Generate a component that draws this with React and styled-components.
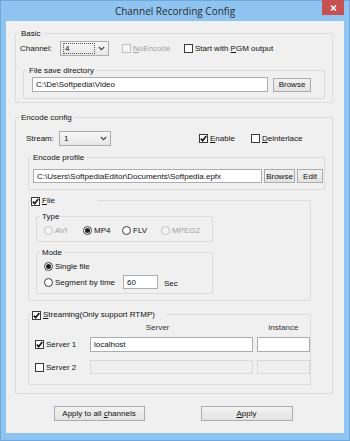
import styled, { createGlobalStyle } from "styled-components";

const GlobalStyle = createGlobalStyle`
  * {
    box-sizing: border-box;
  }
  body {
    margin: 0;
    font-family: "Liberation Sans", Arial, sans-serif;
    font-size: 8px;
    color: #111;
  }
`;

const Chevron = () => (
  <svg width="7" height="5" viewBox="0 0 7 5">
    <polyline points="0.8,1 3.5,3.7 6.2,1" fill="none" stroke="#444" strokeWidth="1.1" />
  </svg>
);

const CheckMark = () => (
  <svg width="7" height="7" viewBox="0 0 7 7">
    <polyline points="0.8,3.6 2.7,5.6 6.3,1" fill="none" stroke="#1c1c1c" strokeWidth="1.7" />
  </svg>
);

const Check = ({ checked, disabled, w, ml, children }) => (
  <CheckItem $w={w} $ml={ml} $disabled={disabled}>
    <Box $disabled={disabled}>{checked && <CheckMark />}</Box>
    <span>{children}</span>
  </CheckItem>
);

const Radio = ({ checked, disabled, w, children }) => (
  <CheckItem $w={w} $disabled={disabled}>
    <Circle $disabled={disabled}>{checked && <Dot />}</Circle>
    <span>{children}</span>
  </CheckItem>
);

export default function App() {
  return (
    <>
      <GlobalStyle />
      <Window>
        <TitleBar>
          <div />
          <Title>Channel Recording Config</Title>
          <CloseButton>
            <svg width="7" height="6" viewBox="0 0 7 6">
              <path d="M1 0.5 L6 5.5 M6 0.5 L1 5.5" stroke="#fff" strokeWidth="1.5" />
            </svg>
          </CloseButton>
        </TitleBar>

        <Client>
          <GroupBox $pb={3}>
            <GroupTitle>Basic</GroupTitle>
            <Row $h={15} $mt={2} $pl={4}>
              <Label $w={40}>Channel:</Label>
              <Combo $w={49}>
                <ComboValue $focus>4</ComboValue>
                <Chevron />
              </Combo>
              <Check disabled w={62} ml={13}>
                <u>N</u>oEncode
              </Check>
              <Check>
                Start with <u>P</u>GM output
              </Check>
            </Row>

            <GroupBox $m="14px 7px 0" $pb={6}>
              <GroupTitle>File save directory</GroupTitle>
              <Row $h={15} $mt={1} $pl={8}>
                <TextField $w={236}>C:\De\Softpedia\Video</TextField>
                <Button $w={38} $h={14} $ml={5}>
                  <span>Browse</span>
                </Button>
              </Row>
            </GroupBox>
          </GroupBox>

          <GroupBox $m="14px 0 0" $pb={8}>
            <GroupTitle>Encode config</GroupTitle>
            <Row $h={15} $mt={8} $pl={10}>
              <Label $w={33}>Stream:</Label>
              <Combo $w={52}>
                <ComboValue>1</ComboValue>
                <Chevron />
              </Combo>
              <Check checked w={52} ml={88}>
                <u>E</u>nable
              </Check>
              <Check>
                <u>D</u>einterlace
              </Check>
            </Row>

            <GroupBox $m="11px 7px 0 12px" $pb={6}>
              <GroupTitle $ml={2}>Encode profile</GroupTitle>
              <Row $h={14} $mt={6} $pl={4}>
                <TextField $w={229} $h={14}>
                  C:\Users\SoftpediaEditor\Documents\Softpedia.epfx
                </TextField>
                <Button $w={31} $h={14} $ml={2}>
                  <span>Browse</span>
                </Button>
                <Button $w={26} $h={14} $ml={2}>
                  <span>Edit</span>
                </Button>
              </Row>
            </GroupBox>

            <GroupBox $m="10px 21px 0 12px" $pb={6}>
              <GroupTitle $ml={2} $px={0} $w={66}>
                <Check checked>
                  <u>F</u>ile
                </Check>
              </GroupTitle>

              <GroupBox $m="10px 0 0 7px" $w={177} $pb={6}>
                <GroupTitle>Type</GroupTitle>
                <Row $h={10} $mt={3} $pl={7}>
                  <Radio disabled w={39}>
                    AVI
                  </Radio>
                  <Radio checked w={39}>
                    MP4
                  </Radio>
                  <Radio w={39}>FLV</Radio>
                  <Radio disabled w={39}>
                    MPEG2
                  </Radio>
                </Row>
              </GroupBox>

              <GroupBox $m="10px 0 0 7px" $w={177} $pb={4}>
                <GroupTitle>Mode</GroupTitle>
                <Row $h={10} $mt={3} $pl={7}>
                  <Radio checked>Single file</Radio>
                </Row>
                <Row $h={14} $mt={4} $pl={7}>
                  <Radio>Segment by time</Radio>
                  <TextField $w={35} $h={14} $ml={8}>
                    60
                  </TextField>
                  <Unit>Sec</Unit>
                </Row>
              </GroupBox>
            </GroupBox>

            <GroupBox $m="13px 21px 0 12px" $pb={10}>
              <GroupTitle $ml={3} $px={0} $w={134}>
                <Check checked>
                  <u>S</u>treaming(Only support RTMP)
                </Check>
              </GroupTitle>
              <StreamRow $h={10} $mt={2}>
                <div />
                <HeaderCell $pr={28}>Server</HeaderCell>
                <HeaderCell>instance</HeaderCell>
              </StreamRow>
              <StreamRow $h={15} $mt={5}>
                <Check checked>Server 1</Check>
                <TextField $w={163}>localhost</TextField>
                <TextField $w={53} />
              </StreamRow>
              <StreamRow $h={14} $mt={8}>
                <Check>Server 2</Check>
                <TextField $w={163} $h={14} $disabled />
                <TextField $w={53} $h={14} $disabled />
              </StreamRow>
            </GroupBox>
          </GroupBox>

          <ButtonBar>
            <Button $w={91} $h={15}>
              <span>
                Apply to all <u>c</u>hannels
              </span>
            </Button>
            <Button $w={92} $h={15}>
              <span>
                <u>A</u>pply
              </span>
            </Button>
          </ButtonBar>
        </Client>
      </Window>
    </>
  );
}

const Window = styled.div`
  width: 350px;
  height: 441px;
  background: #8fc4f1;
  border: 1px solid #6ea8dd;
  display: flex;
  flex-direction: column;
`;

const TitleBar = styled.div`
  height: 21px;
  display: grid;
  grid-template-columns: 1fr auto 1fr;
  align-items: center;
`;

const Title = styled.div`
  font-family: "Open Sans", "Liberation Sans", sans-serif;
  font-size: 10px;
  color: #2a2a2a;
  white-space: nowrap;
`;

const CloseButton = styled.div`
  justify-self: end;
  align-self: start;
  margin: -1px 5px 0 0;
  width: 22px;
  height: 15px;
  background: #c75050;
  display: flex;
  align-items: center;
  justify-content: center;
`;

const Client = styled.div`
  flex: 1;
  margin: 0 5px 7px;
  background: #f0f0f0;
  padding: 12px 11px 12px 9px;
  display: flex;
  flex-direction: column;
`;

const GroupBox = styled.div`
  border: 1px solid #dcdcdc;
  border-radius: 2px;
  margin: ${(p) => p.$m || 0};
  padding-bottom: ${(p) => p.$pb || 0}px;
  width: ${(p) => (p.$w ? `${p.$w}px` : "auto")};
`;

const GroupTitle = styled.div`
  display: flex;
  align-items: center;
  height: 10px;
  line-height: 10px;
  margin: -5px 0 0 ${(p) => p.$ml ?? 3}px;
  padding: 0 ${(p) => p.$px ?? 2}px;
  background: #f0f0f0;
  width: ${(p) => (p.$w ? `${p.$w}px` : "fit-content")};
  white-space: nowrap;
`;

const Row = styled.div`
  display: flex;
  align-items: center;
  height: ${(p) => p.$h}px;
  margin-top: ${(p) => p.$mt || 0}px;
  padding-left: ${(p) => p.$pl || 0}px;
  white-space: nowrap;
`;

const Label = styled.span`
  width: ${(p) => p.$w}px;
  flex-shrink: 0;
`;

const Combo = styled.div`
  width: ${(p) => p.$w}px;
  height: 15px;
  flex-shrink: 0;
  border: 1px solid #acacac;
  background: linear-gradient(#f7f7f7, #e7e7e7);
  display: flex;
  align-items: center;
  gap: 3px;
  padding: 0 3px 0 2px;
`;

const ComboValue = styled.span`
  flex: 1;
  height: 11px;
  line-height: 9px;
  padding-left: 1px;
  border: 1px dotted ${(p) => (p.$focus ? "#555" : "transparent")};
`;

const CheckItem = styled.label`
  display: flex;
  align-items: center;
  gap: 2px;
  flex-shrink: 0;
  width: ${(p) => (p.$w ? `${p.$w}px` : "auto")};
  margin-left: ${(p) => p.$ml || 0}px;
  color: ${(p) => (p.$disabled ? "#a2a2a2" : "inherit")};
  white-space: nowrap;
`;

const Box = styled.span`
  width: 9px;
  height: 9px;
  flex-shrink: 0;
  border: 1px solid ${(p) => (p.$disabled ? "#c2c2c2" : "#3a3a3a")};
  background: ${(p) => (p.$disabled ? "#f4f4f4" : "#fff")};
  display: flex;
  align-items: center;
  justify-content: center;
`;

const Circle = styled(Box)`
  border-radius: 50%;
`;

const Dot = styled.span`
  width: 5px;
  height: 5px;
  border-radius: 50%;
  background: #1e1e1e;
`;

const TextField = styled.div`
  width: ${(p) => p.$w}px;
  height: ${(p) => p.$h || 15}px;
  flex-shrink: 0;
  margin-left: ${(p) => p.$ml || 0}px;
  border: 1px solid ${(p) => (p.$disabled ? "#d9d9d9" : "#abadb3")};
  background: ${(p) => (p.$disabled ? "#efefef" : "#fff")};
  padding-left: 3px;
  display: flex;
  align-items: center;
  overflow: hidden;
  white-space: nowrap;
`;

const Button = styled.div`
  width: ${(p) => p.$w}px;
  height: ${(p) => p.$h}px;
  flex-shrink: 0;
  margin-left: ${(p) => p.$ml || 0}px;
  border: 1px solid #acacac;
  background: linear-gradient(#f2f2f2, #e3e3e3);
  display: flex;
  align-items: center;
  justify-content: center;
  white-space: nowrap;
`;

const Unit = styled.span`
  margin-left: 6px;
  padding-top: 2px;
`;

const StreamRow = styled.div`
  display: grid;
  grid-template-columns: 51px 163px 53px;
  column-gap: 4px;
  align-items: center;
  height: ${(p) => p.$h}px;
  margin-top: ${(p) => p.$mt}px;
  padding-left: 6px;
`;

const HeaderCell = styled.div`
  text-align: center;
  padding-right: ${(p) => p.$pr || 0}px;
  color: #333;
`;

const ButtonBar = styled.div`
  display: flex;
  justify-content: center;
  gap: 56px;
  margin: 12px -1px 0 -3px;
`;
